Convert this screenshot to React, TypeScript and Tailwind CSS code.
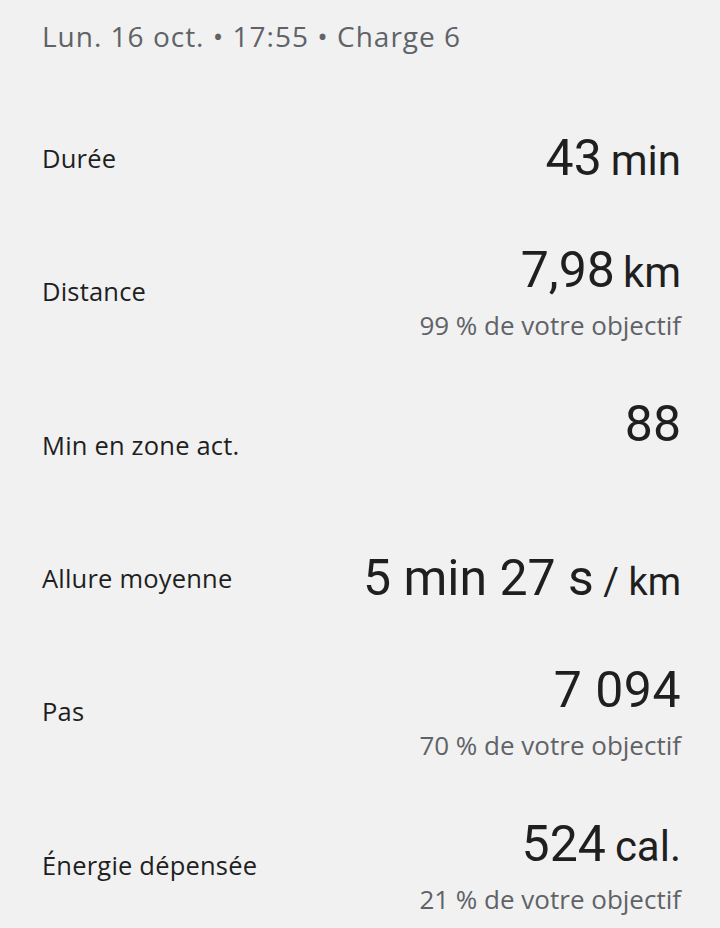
import React from "react";

type Row = { label: string; value: React.ReactNode; sub?: string };

const U = ({ children, cls }: { children: React.ReactNode; cls: string }) => (
  <span className={cls}>{children}</span>
);

const rows: Row[] = [
  {
    label: "Durée",
    value: (
      <>
        <span>43</span>
        <U cls="text-[42px] leading-none ml-[9px]">min</U>
      </>
    ),
  },
  {
    label: "Distance",
    value: (
      <>
        <span>7,98</span>
        <U cls="text-[42px] leading-none ml-[8px]">km</U>
      </>
    ),
    sub: "99 % de votre objectif",
  },
  { label: "Min en zone act.", value: <span>88</span>, sub: "" },
  {
    label: "Allure moyenne",
    value: (
      <>
        <span>5 min 27 s</span>
        <U cls="text-[38px] leading-none"> / km</U>
      </>
    ),
  },
  { label: "Pas", value: <span className="tracking-[0.5px]">7 094</span>, sub: "70 % de votre objectif" },
  {
    label: "Énergie dépensée",
    value: (
      <>
        <span>524</span>
        <U cls="text-[42px] leading-none ml-[9px]">cal.</U>
      </>
    ),
    sub: "21 % de votre objectif",
  },
];

export default function App() {
  return (
    <div className="w-[720px] h-[928px] overflow-hidden bg-[#f1f1f1] pl-[42px] pr-[39px]">
      <div className="h-[102px] pt-[18px]">
        <div
          className="text-[28px] leading-[36px] tracking-[1px] text-[#5f6368]"
          style={{ fontFamily: "'Open Sans', sans-serif" }}
        >
          Lun. 16 oct. • 17:55 • Charge 6
        </div>
      </div>
      {rows.map((r, i) => (
        <div key={i} className="flex items-center justify-between py-[28px]">
          <div
            className="text-[25.5px] leading-[30px] font-medium tracking-[0.2px] text-[#1f1f1f]"
            style={{ fontFamily: "'Open Sans', sans-serif" }}
          >
            {r.label}
          </div>
          <div className="flex flex-col items-end">
            <div
              className="text-[50px] leading-[56px] text-[#1f1f1f] whitespace-pre"
              style={{ fontFamily: "Roboto, sans-serif" }}
            >
              {r.value}
            </div>
            {r.sub !== undefined && (
              <div
                className="mt-[13px] text-[26px] leading-[29px] h-[29px] text-[#5f6368]"
                style={{ fontFamily: "'Open Sans', sans-serif" }}
              >
                {r.sub}
              </div>
            )}
          </div>
        </div>
      ))}
    </div>
  );
}
